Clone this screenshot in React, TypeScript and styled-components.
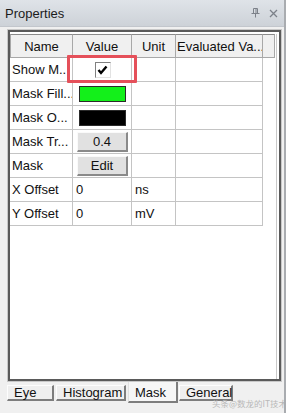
import React from "react";
import styled, { createGlobalStyle } from "styled-components";

const Global = createGlobalStyle`
  html, body {
    margin: 0;
    padding: 0;
    background: #f0f0f0;
    overflow: hidden;
  }
  body {
    font-family: "Liberation Sans", "Noto Sans CJK SC", sans-serif;
    font-size: 13px;
    color: #111;
  }
`;

const Panel = styled.div`
  position: relative;
  width: 286px;
  height: 413px;
  background: #f0f0f0;
  box-sizing: border-box;
  border-right: 2px solid #a9acb0;
  display: flex;
  flex-direction: column;
  overflow: hidden;
`;

const TitleBar = styled.div`
  height: 26px;
  flex: none;
  display: flex;
  align-items: center;
  padding: 0 6px 0 5px;
  background: linear-gradient(#dfe3e8, #cdd2d8);
  border-bottom: 1px solid #c2c6cc;
  color: #1b1b1b;
  font-size: 13px;
  .title {
    flex: 1;
  }
`;

const TitleIcons = styled.div`
  display: flex;
  align-items: center;
  gap: 9px;
  color: #7c8189;
`;

const Body = styled.div`
  flex: 1;
  display: flex;
  flex-direction: column;
  padding: 3px 3px 0 8px;
`;

const Frame = styled.div`
  height: 351px;
  box-sizing: border-box;
  background: #fff;
  border: 2px solid #5a5a5a;
  box-shadow: 0 0 0 1px #c8c8c8;
  padding: 2px 1px 0 0;
`;

const Inner = styled.div`
  height: 100%;
  border-right: 1px solid #c9c9c9;
  margin-right: 1px;
`;

const HeaderRow = styled.div`
  display: grid;
  grid-template-columns: 63px 59px 44px 87px 12px;
  height: 24px;
`;

const HeadCell = styled.div<{ $align?: string }>`
  display: flex;
  align-items: center;
  justify-content: ${(p) => p.$align || "center"};
  padding: 0 1px;
  background: #f0f0f0;
  border-top: 1px solid #8a8a8a;
  border-right: 1px solid #a8a8a8;
  border-bottom: 1px solid #a8a8a8;
  white-space: nowrap;
  overflow: hidden;
  &:first-child {
    border-left: 1px solid #a8a8a8;
  }
`;

const Row = styled.div`
  display: grid;
  grid-template-columns: 63px 59px 44px 87px;
  height: 24px;
`;

const Cell = styled.div<{ $center?: boolean }>`
  display: flex;
  align-items: center;
  justify-content: ${(p) => (p.$center ? "center" : "flex-start")};
  padding: 0 3px;
  border-right: 1px solid #c4c4c4;
  border-bottom: 1px solid #c4c4c4;
  white-space: nowrap;
  overflow: hidden;
  &:first-child {
    padding-left: 2px;
  }
`;

const Check = styled.div`
  width: 14px;
  height: 14px;
  background: #fff;
  border-top: 1px solid #808080;
  border-left: 1px solid #808080;
  border-right: 1px solid #e2e2e2;
  border-bottom: 1px solid #e2e2e2;
  display: flex;
  align-items: center;
  justify-content: center;
  margin-left: 1px;
`;

const Swatch = styled.div<{ $color: string }>`
  width: 45px;
  height: 14px;
  background: ${(p) => p.$color};
  border: 1px solid #2a2a2a;
  margin-left: 3px;
`;

const Button = styled.div`
  width: 50px;
  height: 17px;
  margin-left: 1px;
  display: flex;
  align-items: center;
  justify-content: center;
  background: #e1e1e1;
  border-top: 1px solid #fafafa;
  border-left: 1px solid #fafafa;
  border-right: 2px solid #8a8a8a;
  border-bottom: 2px solid #8a8a8a;
`;

const Highlight = styled.div`
  position: absolute;
  left: 67px;
  top: 55px;
  width: 70px;
  height: 28px;
  box-sizing: border-box;
  border: 3px solid #e5505a;
  border-radius: 1px;
`;

const Tabs = styled.div`
  display: flex;
  align-items: flex-start;
  margin-left: -1px;
  margin-top: 1px;
`;

const Tab = styled.div<{ $active?: boolean; $w: number }>`
  width: ${(p) => p.$w}px;
  box-sizing: border-box;
  height: ${(p) => (p.$active ? 21 : 16)}px;
  margin-top: ${(p) => (p.$active ? 0 : 3)}px;
  margin-right: ${(p) => (p.$active ? 1 : 2)}px;
  padding: ${(p) => (p.$active ? "4px 0 0 6px" : "0 0 0 6px")};
  background: ${(p) => (p.$active ? "#f6f6f6" : "#efefef")};
  border-left: 1px solid ${(p) => (p.$active ? "#e0e0e0" : "#fdfdfd")};
  border-top: ${(p) => (p.$active ? "none" : "1px solid #fdfdfd")};
  border-right: 2px solid #7d7d7d;
  border-bottom: 2px solid #7d7d7d;
  line-height: 14px;
  font-size: 13px;
  white-space: nowrap;
`;

const Watermark = styled.div`
  position: absolute;
  left: 212px;
  top: 397px;
  font-size: 8.5px;
  color: #b8b8b8;
  font-family: "Noto Sans CJK SC", sans-serif;
  white-space: nowrap;
`;

const rows: { name: string; value: React.ReactNode; center?: boolean; unit?: string }[] = [
  {
    name: "Show M..",
    center: true,
    value: (
      <Check>
        <svg width="11" height="10" viewBox="0 0 11 10">
          <path d="M1.5 5 L4 8 L9.5 1.5" stroke="#000" strokeWidth="2.4" fill="none" />
        </svg>
      </Check>
    ),
  },
  { name: "Mask Fill...", value: <Swatch $color="#13f01a" /> },
  { name: "Mask O...", value: <Swatch $color="#000" /> },
  { name: "Mask Tr...", value: <Button>0.4</Button> },
  { name: "Mask", value: <Button>Edit</Button> },
  { name: "X Offset", value: "0", unit: "ns" },
  { name: "Y Offset", value: "0", unit: "mV" },
];

const tabs = [
  { title: "Eye", w: 47 },
  { title: "Histogram", w: 70 },
  { title: "Mask", w: 50, active: true },
  { title: "General", w: 54 },
];

const App = () => {
  return (
    <Panel>
      <Global />
      <TitleBar>
        <span className="title">Properties</span>
        <TitleIcons>
          <svg width="9" height="10" viewBox="0 0 9 10">
            <path d="M2.5 0.5 H6.5 V5.5 H2.5 Z M0.5 5.5 H8.5 M4.5 5.5 V9.5 M5 1 V5" stroke="#7c8189" fill="none" />
          </svg>
          <svg width="9" height="9" viewBox="0 0 9 9">
            <path d="M1 1 L8 8 M8 1 L1 8" stroke="#7c8189" strokeWidth="1.3" />
          </svg>
        </TitleIcons>
      </TitleBar>
      <Body>
        <Frame>
          <Inner>
            <HeaderRow>
              <HeadCell>Name</HeadCell>
              <HeadCell>Value</HeadCell>
              <HeadCell>Unit</HeadCell>
              <HeadCell $align="flex-start">Evaluated Va...</HeadCell>
              <HeadCell />
            </HeaderRow>
            {rows.map((r) => (
              <Row key={r.name}>
                <Cell>{r.name}</Cell>
                <Cell $center={r.center}>{r.value}</Cell>
                <Cell>{r.unit}</Cell>
                <Cell />
              </Row>
            ))}
          </Inner>
        </Frame>
        <Tabs>
          {tabs.map((t) => (
            <Tab key={t.title} $w={t.w} $active={t.active}>
              {t.title}
            </Tab>
          ))}
        </Tabs>
      </Body>
      <Highlight />
      <Watermark>头条@数龙的IT技术</Watermark>
    </Panel>
  );
};

export default App;
